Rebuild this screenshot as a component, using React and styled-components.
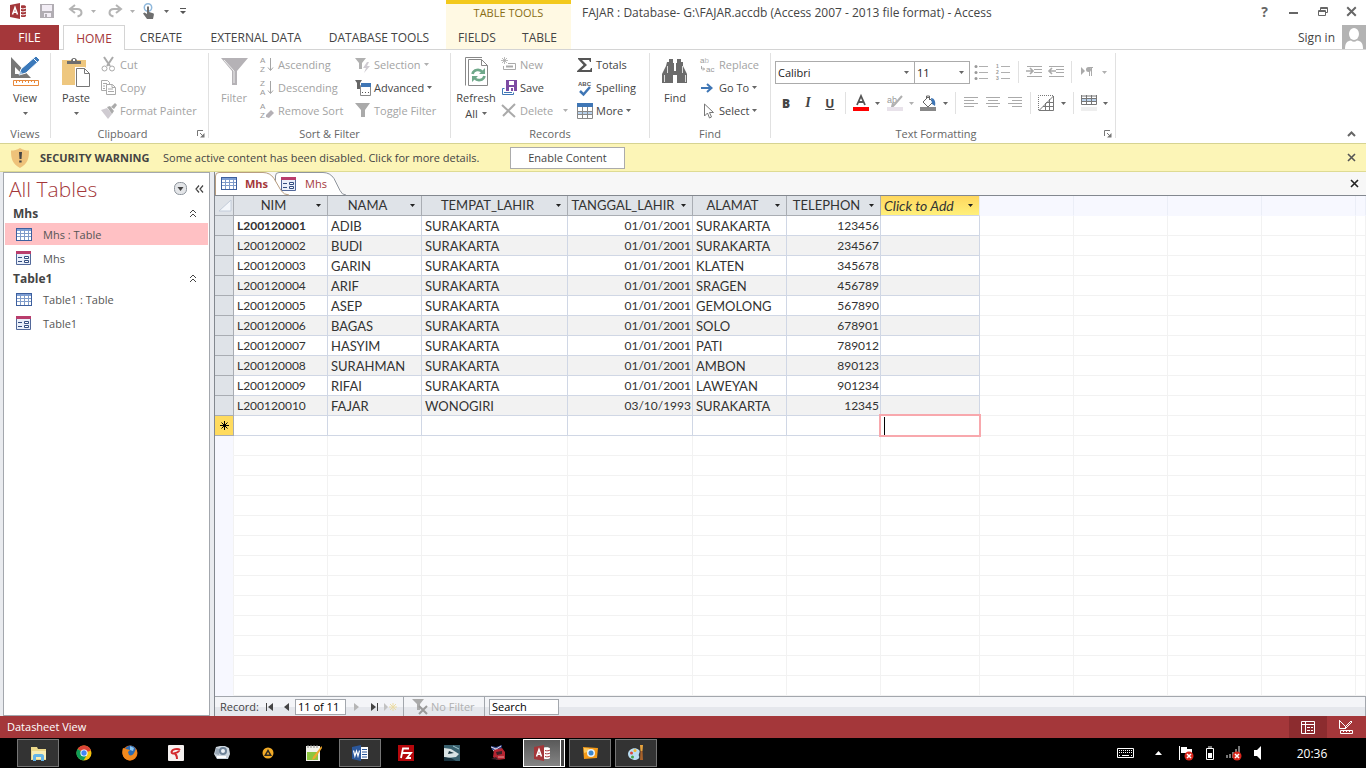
import React from "react";
import styled, { createGlobalStyle, css } from "styled-components";

const GlobalStyle = createGlobalStyle`
  * {
    box-sizing: border-box;
  }

  body {
    margin: 0;
    font-family: "Open Sans", "Noto Sans", sans-serif;
    font-size: 11px;
    color: #444;
    background: #fff;
  }

  button,
  input,
  select {
    font: inherit;
    color: inherit;
    margin: 0;
  }

  svg {
    display: block;
    flex: none;
    overflow: visible;
  }
`;

/* ---------- data ---------- */

const columns = [
  { name: "NIM", width: 94 },
  { name: "NAMA", width: 94 },
  { name: "TEMPAT_LAHIR", width: 146 },
  { name: "TANGGAL_LAHIR", width: 125 },
  { name: "ALAMAT", width: 94 },
  { name: "TELEPHON", width: 94 },
];

const records = [
  ["L200120001", "ADIB", "SURAKARTA", "01/01/2001", "SURAKARTA", "123456"],
  ["L200120002", "BUDI", "SURAKARTA", "01/01/2001", "SURAKARTA", "234567"],
  ["L200120003", "GARIN", "SURAKARTA", "01/01/2001", "KLATEN", "345678"],
  ["L200120004", "ARIF", "SURAKARTA", "01/01/2001", "SRAGEN", "456789"],
  ["L200120005", "ASEP", "SURAKARTA", "01/01/2001", "GEMOLONG", "567890"],
  ["L200120006", "BAGAS", "SURAKARTA", "01/01/2001", "SOLO", "678901"],
  ["L200120007", "HASYIM", "SURAKARTA", "01/01/2001", "PATI", "789012"],
  ["L200120008", "SURAHMAN", "SURAKARTA", "01/01/2001", "AMBON", "890123"],
  ["L200120009", "RIFAI", "SURAKARTA", "01/01/2001", "LAWEYAN", "901234"],
  ["L200120010", "FAJAR", "WONOGIRI", "03/10/1993", "SURAKARTA", "12345"],
];

const navGroups = [
  {
    name: "Mhs",
    items: [
      { name: "Mhs : Table", type: "table", selected: true },
      { name: "Mhs", type: "form" },
    ],
  },
  {
    name: "Table1",
    items: [
      { name: "Table1 : Table", type: "table" },
      { name: "Table1", type: "form" },
    ],
  },
];

/* ---------- icons ---------- */

const Svg = ({ w = 16, h = 16, children, ...rest }) => (
  <svg width={w} height={h} viewBox={`0 0 ${w} ${h}`} fill="none" aria-hidden="true" {...rest}>
    {children}
  </svg>
);

const Arrow = ({ color = "#666" }) => (
  <Svg w={5} h={3}>
    <path d="M0 0h5L2.5 3z" fill={color} />
  </Svg>
);

const AccessIcon = () => (
  <Svg>
    <path d="M0 2L10 0v16L0 14z" fill="#a4373a" />
    <path d="M11 2.500c3-.8 5 0 5 1v9.200c0 1-2 1.800-5 1z" fill="#a4373a" />
    <path d="M11 5.500c2 .6 4 .3 5-.5M11 8.500c2 .6 4 .3 5-.5M11 11.500c2 .6 4 .3 5-.5" stroke="#fff" />
    <path d="M2.500 11.500L5 4.500l2.500 7M3.500 9.200h3" stroke="#fff" strokeWidth="1.500" />
  </Svg>
);

const AccessTaskIcon = () => (
  <Svg>
    <path d="M10 2.500c3-.8 6 0 6 1v9.200c0 1-3 1.800-6 1z" fill="#fff" />
    <path d="M11 5.500c2 .6 4 .3 5-.5M11 8.500c2 .6 4 .3 5-.5M11 11.500c2 .6 4 .3 5-.5" stroke="#a4373a" />
    <path d="M0 2L10 0v16L0 14z" fill="#a4373a" />
    <path d="M2.500 11.500L5 4.500l2.500 7M3.500 9.200h3" stroke="#fff" strokeWidth="1.500" />
  </Svg>
);

const SaveIcon = () => (
  <Svg w={14} h={14}>
    <path d="M0 0h14v14H0z" fill="#b1adb3" />
    <path d="M2 1h10v6H2zM4 9h7v4H4z" fill="#f2edf5" />
    <path d="M5 10h2v3H5z" fill="#b1adb3" />
  </Svg>
);

const UndoIcon = () => (
  <Svg w={16} h={14} stroke="#b4b4b4" strokeWidth="2">
    <path d="M7 1L2 5l5 4M3 5h6c3 0 4.500 1.500 4.500 4s-2 3-4 3.500" />
  </Svg>
);

const RedoIcon = () => (
  <Svg w={16} h={14} stroke="#b4b4b4" strokeWidth="2">
    <path d="M9 1l5 4-5 4M13 5H7C4 5 2.500 6.500 2.500 9s2 3 4 3.500" />
  </Svg>
);

const TouchIcon = () => (
  <Svg w={14} h={16}>
    <circle cx="6" cy="4.500" r="3.700" stroke="#8fb8dc" strokeWidth="1.500" />
    <path d="M5 3.500h2V9l4 1.200c1 .3 1 1 .8 2L11 16H5l-4-5.500 1.500-1L5 11z" fill="#6e6e6e" />
  </Svg>
);

const CustomizeIcon = () => (
  <Svg w={6} h={6}>
    <path d="M0 0h6v1H0zM0 3h6L3 6z" fill="#555" />
  </Svg>
);

const PersonIcon = () => (
  <Svg w={24} h={24}>
    <path d="M0 0h24v24H0z" fill="#b3b3b3" />
    <ellipse cx="12" cy="9" rx="5" ry="6" fill="#fff" />
    <path d="M3 24c0-6 2-8 6-8.500 2 1.600 4 1.600 6 0 4 .5 6 2.500 6 8.500z" fill="#fff" />
  </Svg>
);

const ViewIcon = () => (
  <Svg w={32} h={32}>
    <path d="M2 1v21h20L2 1zM6 11l7 7H6z" fill="#777" fillRule="evenodd" />
    <path d="M10 19l2-6L27 0l4 4-14 13z" fill="#3b79ba" stroke="#fff" />
    <path d="M10 19l1.500-4 2.500 2.500z" fill="#9fc0e2" />
    <path d="M24.500 2.500l4 4" stroke="#fff" />
    <path d="M4.500 24.500h25v5h-25z" stroke="#e8893b" fill="#fff" />
    <path d="M7.500 24v3M10.500 24v2M13.500 24v3M16.500 24v2M19.500 24v3M22.500 24v2M25.500 24v3" stroke="#e8893b" />
  </Svg>
);

const PasteIcon = () => (
  <Svg w={32} h={32}>
    <path d="M2 4h24v25H2z" fill="#eec77f" />
    <path d="M7 8V5h4c0-4 6-4 6 0h4v3z" fill="#6d6d6d" />
    <path d="M13 3h2v2h-2z" fill="#fff" />
    <path d="M15 11h10l6 6v15H15z" fill="#fff" />
    <path d="M16.500 12.500h8l5 5v13h-13zM24.500 12.500v5h5" stroke="#777" />
  </Svg>
);

const CutIcon = () => (
  <Svg w={15} h={15} stroke="#aaa">
    <path d="M3 0l6 9M12 0L6 9" strokeWidth="2" />
    <circle cx="3.500" cy="11.500" r="2.500" />
    <circle cx="11" cy="11.500" r="2.500" />
  </Svg>
);

const CopyIcon = () => (
  <Svg w={15} h={15} stroke="#aaa">
    <path d="M5 10.500H.5V.5h6l2 2V4" />
    <path d="M5.500 4.500h6l3 3v7h-9zM11 4.500v3h3M7 9h5M7 11.500h6M2 3.500h4M2 6h2M2 8.500h2" />
  </Svg>
);

const PainterIcon = () => (
  <Svg>
    <path d="M0 7l6-2 5 6-4 5z" fill="#cfcbd1" />
    <path d="M6 4l3-1 4 5-2 3z" fill="#aaa" />
    <path d="M10 4l4-4 2 2-3 4z" fill="#aaa" />
  </Svg>
);

const FilterBigIcon = () => (
  <Svg w={32} h={32}>
    <path d="M3 2h27L19 15v14h-5V15z" fill="#b5b2b6" />
    <path d="M6 4l10 11v12" stroke="#eee" />
  </Svg>
);

const SortIcon = ({ top, bottom, erase }) => (
  <Svg fontFamily="Liberation Sans" fontSize="8">
    <text x="1" y="6" fill="#999">{top}</text>
    <text x="1" y="15" fill="#999">{bottom}</text>
    {erase ? (
      <path d="M7 12l5-5 3 3-5 5-3-1z" fill="#b4b0b5" />
    ) : (
      <path d="M11.500 1v12M9 10.500l2.500 3 2.500-3" stroke="#a5a5a5" />
    )}
  </Svg>
);

const SelectionIcon = () => (
  <Svg>
    <path d="M0 1h11L7 6v6H4V6z" fill="#b0b0b0" />
    <path d="M12 5l-4 6h3l-2 5 6-7h-3l2-4z" fill="#cfcbd2" />
  </Svg>
);

const AdvancedIcon = () => (
  <Svg>
    <path d="M5.500 5.500h10v10h-10z" fill="#fff" stroke="#888" />
    <path d="M6 3h10v4H6z" fill="#3f76b5" />
    <path d="M0 0h7L5 3v6H2V3z" fill="#666" />
    <path d="M7 12h1v1H7zM10 12h1v1h-1zM13 12h1v1h-1z" fill="#555" />
  </Svg>
);

const FunnelIcon = ({ off }) => (
  <Svg>
    <path d={off ? "M0 0h12L8 5v6H5V5z" : "M0 0h15L10 7v7H6V7z"} fill="#aaa" />
    {off && <path d="M7 7l8 8M15 7l-8 8" stroke="#999" strokeWidth="2" />}
  </Svg>
);

const RefreshIcon = () => (
  <Svg w={32} h={32}>
    <path d="M5.500 29.500v-28H22" stroke="#888" />
    <path d="M8.500 3.500h13l6 6v20h-19zM21.500 3.500v6h6" stroke="#888" fill="#fff" />
    <path d="M12.500 18c1-4.500 7-5.500 10-2M24.500 20c-1 4.500-7 5.500-10 2" stroke="#6fa88a" strokeWidth="2.600" />
    <path d="M25 12v6h-6zM12 26v-6h6z" fill="#6fa88a" />
  </Svg>
);

const NewIcon = () => (
  <Svg stroke="#aaa">
    <path d="M3.500 0v7M0 3.500h7M1 1l5 5M6 1L1 6" strokeWidth="0.800" />
    <path d="M4 12.500H2.500V9M7 6.500h7.500v6H4" />
    <path d="M5 9.500h7" strokeWidth="2" />
  </Svg>
);

const SaveRecordIcon = () => (
  <Svg>
    <path d="M5 0h11v11H5z" fill="#7c4ba3" />
    <path d="M8 1h5v4H8zM8 7h5v4H8z" fill="#fff" />
    <path d="M10 8h2v3h-2z" fill="#7c4ba3" />
    <path d="M3.500 8.500h-2v6h11v-2" stroke="#3f76b5" />
    <path d="M3 12h8v1H3z" fill="#3f76b5" />
  </Svg>
);

const DeleteIcon = () => (
  <Svg stroke="#aaa" strokeWidth="2">
    <path d="M1 2l13 12M14 1L2 13" />
  </Svg>
);

const SigmaIcon = () => (
  <Svg>
    <path d="M1 1h13v4h-1l-1-2H5l5 5-5.500 5H13l1-2h1v4H0v-1l6.500-6L1 2z" fill="#555" />
  </Svg>
);

const SpellingIcon = () => (
  <Svg>
    <text x="1" y="6" fontFamily="Liberation Sans" fontSize="6" fontWeight="700" fill="#555">ABC</text>
    <path d="M3 11l3.500 3.500L13 7" stroke="#3f76b5" strokeWidth="2.500" />
  </Svg>
);

const MoreIcon = () => (
  <Svg>
    <path d="M0 0h16v4H0z" fill="#3f76b5" />
    <path d="M0 8h16v4H0z" fill="#b9d1ea" />
    <path d="M.5 4v11.500h15V4M.5 8.500h15M.5 11.500h15M5.500 4v11M10.500 4v11" stroke="#888" />
  </Svg>
);

const FindIcon = () => (
  <Svg w={28} h={26} fill="none">
    <path d="M6 3h2V0h4v4h1v8h2V4h1V0h4v3h2v4l4 8v9H16v-8h-4v8H1v-9l4-8z" fill="#6b6b6b" />
    <path d="M6.500 7v7M21.500 7v7M3.500 16v7M24.500 16v7" stroke="#ddd" />
  </Svg>
);

const ReplaceIcon = () => (
  <Svg fontFamily="Liberation Sans" fontSize="8">
    <text x="0" y="6" fill="#999">a<tspan fill="#bbb">b</tspan></text>
    <text x="6" y="15" fill="#999">ac</text>
    <path d="M1.500 9v3h3M3 10.500L4.500 12 3 13.500" stroke="#aaa" />
  </Svg>
);

const GoToIcon = () => (
  <Svg>
    <path d="M1 8h10M7 4l4.500 4L7 12" stroke="#3f76b5" strokeWidth="2" />
  </Svg>
);

const SelectIcon = () => (
  <Svg>
    <path d="M4.500 1v12l3-3 2 5 2-1-2-4.500h4z" fill="#fff" stroke="#777" />
  </Svg>
);

const FontColorIcon = () => (
  <Svg>
    <path d="M4 10l4-9 4 9M5.500 7h5" stroke="#555" strokeWidth="1.800" />
    <path d="M0 12h16v4H0z" fill="#f00" />
  </Svg>
);

const HighlightIcon = () => (
  <Svg>
    <text x="0" y="8" fontFamily="Liberation Sans" fontSize="9" fill="#999">ab</text>
    <path d="M15 1l-7 8-3 3 1-4" stroke="#b0b0b0" strokeWidth="2" />
    <path d="M0 12h16v4H0z" fill="#e8e2ea" />
  </Svg>
);

const FillIcon = () => (
  <Svg>
    <path d="M3 7l5-5 5 5-5 5zM6.500 4V1h3v4" stroke="#666" />
    <path d="M11 3c3 0 5 3 4 8l-3-2z" fill="#3f76b5" />
    <path d="M0 12h16v4H0z" fill="#888" />
  </Svg>
);

const ListIcon = ({ numbered }) => (
  <Svg w={15} h={16} fontFamily="Liberation Sans" fontSize="5" fontWeight="700">
    {[2.5, 8.5, 14.5].map((y, i) => (
      <g key={y}>
        {numbered ? (
          <text x="0" y={y + 1.5} fill="#999">{i + 1}</text>
        ) : (
          <circle cx="2" cy={y} r="1.500" fill="#999" />
        )}
        <path d={`M5 ${y}h9`} stroke="#b0b0b0" />
      </g>
    ))}
  </Svg>
);

const IndentIcon = ({ back }) => (
  <Svg w={16} h={12} stroke="#aaa">
    <path d="M1 .5h15M8 3.500h8M8 6.500h8M1 10.500h15" />
    <path d={back ? "M8 5H1M4 2L1 5l3 3" : "M0 5h7M4 2l3 3-3 3"} strokeWidth="1.600" />
  </Svg>
);

const DirectionIcon = () => (
  <Svg w={14} h={10} fill="none">
    <path d="M1 0l4 4-4 4z" fill="#aaa" />
    <path d="M13 .5H9M9.500 0v9M11.500 0v9" stroke="#aaa" />
    <circle cx="8.500" cy="2.500" r="2.500" fill="#aaa" />
  </Svg>
);

const AlignIcon = ({ align }) => {
  const x = { left: 0, center: 2, right: 4 }[align];
  return (
    <Svg w={14} h={12} stroke="#aaa">
      <path d={`M0 .5h14M${x} 3.500h10M0 6.500h14M${x} 9.500h10`} />
    </Svg>
  );
};

const GridlinesIcon = () => (
  <Svg>
    <path d="M.5 15V.5H15" stroke="#777" strokeDasharray="1 1" />
    <path d="M1 15.500h14.500V1zM5 11.500h10M8 7.500h7M7.500 8v7M11.500 4v11" stroke="#777" />
  </Svg>
);

const AltRowIcon = () => (
  <Svg>
    <path d="M0 0h16v10H0z" fill="#fff" />
    <path d="M0 4h16v3H0z" fill="#b9d1ea" />
    <path d="M.5 1h15M.5 0v9.500h15V0M.5 3.500h15M.5 6.500h15M5.500 0v9M10.500 0v9" stroke="#777" />
    <path d="M0 12h16v4H0z" fill="#eee" />
  </Svg>
);

const LauncherIcon = () => (
  <Svg w={8} h={8}>
    <path d="M.5 6V.5H6M3 3l3 3" stroke="#777" />
    <path d="M7.500 3v4.500H3z" fill="#777" />
  </Svg>
);

const ShieldIcon = () => (
  <Svg w={20} h={22}>
    <path d="M10 1c3 2 6 2.500 9 2.500 0 8-1 13-9 17.500C2 16.500 1 11.500 1 3.500 4 3.500 7 3 10 1z" fill="#eec27a" />
    <path d="M9 5h3l-.5 7h-2zM9.200 13.500h2.400v2H9.200z" fill="#444" />
  </Svg>
);

const CloseIcon = ({ size = 9, color = "#555" }) => (
  <Svg w={9} h={9} width={size} height={size}>
    <path d="M1 1l7 7M8 1L1 8" stroke={color} strokeWidth="1.600" />
  </Svg>
);

const TableIcon = () => (
  <Svg w={16} h={13}>
    <path d="M0 0h16v13H0z" fill="#3d5f9e" />
    <path d="M1 3h14v9H1z" fill="#fff" />
    <path d="M1 1h14v2H1z" fill="#7d9fd6" />
    <path d="M4.500 1v11M8.500 1v11M12.500 1v11M1 5.500h14M1 8.500h14" stroke="#7f9bc9" />
  </Svg>
);

const FormIcon = () => (
  <Svg w={15} h={14}>
    <path d="M.5 .5h14v13H.5z" fill="#e9effa" stroke="#53699a" />
    <path d="M0 0h15v3H0z" fill="#b93d6c" />
    <path d="M2 6h4v1H2zM2 10h4v1H2z" fill="#334d80" />
    <path d="M8.500 5.500h4v2h-4zM8.500 9.500h4v2h-4z" stroke="#334d80" fill="#fff" />
  </Svg>
);

const CollapseIcon = () => (
  <Svg w={8} h={9} stroke="#444">
    <path d="M1 4l3-3 3 3M1 8l3-3 3 3" />
  </Svg>
);

const RecordIcon = ({ type, off }) => {
  const shapes = {
    first: "M0 0h1v8H0zM7 0v8L2 4z",
    prev: "M6 0v8L1 4z",
    next: "M1 0v8l5-4z",
    last: "M0 0v8l5-4zM6 0h1v8H6z",
  };
  return (
    <Svg w={8} h={8}>
      <path d={shapes[type]} fill={off ? "#b5b5b5" : "#444"} />
    </Svg>
  );
};

const NewRecordIcon = () => (
  <Svg w={13} h={8}>
    <path d="M0 0v8l4-4z" fill="#c2c2c2" />
    <path d="M9 0v8M5 4h8M6 1l6 6M12 1L6 7" stroke="#ecdca4" />
  </Svg>
);

const DatasheetIcon = () => (
  <Svg w={14} h={13} stroke="#fff">
    <path d="M.5 .5h13v12H.5zM0 3.500h14M4.500 0v13M6 6.500h3M10 6.500h2M6 9.500h3M10 9.500h2" />
  </Svg>
);

const DesignIcon = () => (
  <Svg w={14} h={14} stroke="#fff">
    <path d="M.5 0v8.500H7M1 1l5 5M6 7l6-6 1 1-6 6zM1.500 10.500h12v3h-12zM4.500 10v2M7.500 10v2M10.500 10v2" />
  </Svg>
);

/* taskbar icons */

const ExplorerIcon = () => (
  <Svg w={17} h={17}>
    <path d="M1 2h6l1 2h8v11H1z" fill="#ecd88a" />
    <path d="M2 6h14v8H2z" fill="#f8edb5" />
    <path d="M3 16v-5c0-1 1-2 2-2h7c1 0 2 1 2 2v5h-3v-4H6v4z" fill="#65b5e8" />
  </Svg>
);

const ChromeIcon = () => (
  <Svg>
    <circle cx="8" cy="8" r="7.500" fill="#f4c20d" />
    <path d="M8 8L1.500 4A7.500 7.500 0 0 1 15 5.500z" fill="#db4437" />
    <path d="M8 8L1.500 4a7.500 7.500 0 0 0 6 11.500l3-5z" fill="#0f9d58" />
    <circle cx="8" cy="8" r="3.600" fill="#fff" />
    <circle cx="8" cy="8" r="2.700" fill="#4285f4" />
  </Svg>
);

const FirefoxIcon = () => (
  <Svg>
    <circle cx="8" cy="8" r="7.500" fill="#e66a10" />
    <circle cx="8.500" cy="6" r="5.500" fill="#2b6ab3" />
    <path d="M1 3l3 1 4 1-2 2 1 3c2 1 4 0 5-2l2-4c3 5-1 11-6 11.500C1 15-1 8 1 3z" fill="#f28a1e" />
    <path d="M8 1l4 2-1 3-3-1z" fill="#8cc8f2" />
  </Svg>
);

const RedNoteIcon = () => (
  <Svg>
    <rect width="16" height="16" rx="1" fill="#f5f1f0" />
    <path d="M12 5C10 3 4 4 3.500 7c0 3 6 1 8-1.500M6 8c2 1 3 3 3 6" stroke="#d3272b" strokeWidth="2" />
  </Svg>
);

const GhostIcon = () => (
  <Svg>
    <path d="M2 2l4-1h5l4 2 1 6-2 5H3L0 9z" fill="#ccd6df" />
    <path d="M2 3l4 1-1 6-4-1z" fill="#9aa9b8" />
    <circle cx="9" cy="6" r="4" fill="#6f8499" />
    <circle cx="9" cy="6" r="2" fill="#eef3f8" />
    <path d="M3 12h9" stroke="#fff" strokeWidth="2" />
  </Svg>
);

const AimpIcon = () => (
  <Svg w={14} h={14}>
    <circle cx="7" cy="7" r="5.500" fill="#f2ab27" />
    <path d="M7 3l4 7H3z" fill="#2d2920" />
    <path d="M7 6l1.500 2.500h-3z" fill="#f2ab27" />
  </Svg>
);

const NotepadIcon = () => (
  <Svg>
    <path d="M0 1h14v15H0z" fill="#f2f2ec" />
    <path d="M1 7h11v8H1z" fill="#8cc63f" />
    <path d="M2 0v3M5 0v3M8 0v3M11 0v3" stroke="#888" />
    <path d="M15.500 1L7 12l-1 3 3-1.500L16 3z" fill="#f0a72c" />
  </Svg>
);

const WordIcon = () => (
  <Svg>
    <path d="M8 2h8v12H8z" fill="#fff" />
    <path d="M10 4.500h5M10 7h5M10 9.500h5M10 12h5" stroke="#2b579a" />
    <path d="M0 2l9-2v16l-9-2z" fill="#2b579a" />
    <path d="M1.500 5.500l1.400 5.500 1.600-5L6 11l1.500-5.500" stroke="#fff" strokeWidth="1.200" />
  </Svg>
);

const FilezillaIcon = () => (
  <Svg>
    <path d="M0 0h16v16H0z" fill="#b5070c" />
    <path d="M3 13L5 3.500h6M4 8h4M8 8h5l-4 5h4" stroke="#fff" strokeWidth="1.800" />
  </Svg>
);

const TrainIcon = () => (
  <Svg>
    <path d="M0 0h16v16H0z" fill="#38606e" />
    <path d="M0 3l7 1 8 5-3 3-8 1-4-1z" fill="#d9e3e4" />
    <path d="M0 12l7 1 5 3H0zM5 6l5 2-6 1z" fill="#17323e" />
    <path d="M9 1l6 3" stroke="#9fc6cf" />
  </Svg>
);

const TruckIcon = () => (
  <Svg>
    <path d="M1 1l5 1 6-2-1 6-9-1z" fill="#33478f" />
    <path d="M1 2l10 4M11 1L3 6" stroke="#e7dfe7" />
    <path d="M4 5l8-2 3 4v7l-8 1-4-3z" fill="#b42531" />
    <path d="M6 7l6-1v3l-5 1zM1 14l5-2 3 3z" fill="#3b2028" />
    <path d="M8 12h6" stroke="#e9a0a0" />
  </Svg>
);

const CameraIcon = () => (
  <Svg w={17} h={16}>
    <path d="M1 2l15 1-1 10-13 1z" fill="#f49a18" />
    <path d="M2 3l5 .5v3L2 8z" fill="#ffc95a" />
    <circle cx="9" cy="8" r="4" fill="#e8f2fb" />
    <circle cx="9" cy="8" r="2.500" fill="#3a87cf" />
  </Svg>
);

const PaintIcon = () => (
  <Svg>
    <path d="M0 9c0-5 7-8 11-4 2 2-1 4 0 6s-1 4-5 4c-4-1-6-3-6-6z" fill="#b9dcf1" />
    <circle cx="3.500" cy="8" r="1.500" fill="#d8453c" />
    <circle cx="7" cy="5.500" r="1.500" fill="#f1b62e" />
    <circle cx="4.500" cy="12" r="1.500" fill="#49a548" />
    <path d="M12 0h3l-.5 6h-2z" fill="#e8a33d" />
    <path d="M12.500 6h2l.5 9h-3z" fill="#a8612a" />
  </Svg>
);

const KeyboardIcon = () => (
  <Svg w={17} h={10}>
    <path d="M.5 .5h16v9H.5z" stroke="#fff" />
    <path d="M2 2.500h13M2 4.500h13" stroke="#fff" strokeDasharray="1 1" />
    <path d="M2 7.500h1M5 7.500h7M14 7.500h1" stroke="#fff" />
  </Svg>
);

const Alert = () => (
  <>
    <circle cx="11" cy="11" r="4.500" fill="#d9261c" />
    <path d="M9 9l4 4M13 9l-4 4" stroke="#fff" strokeWidth="1.500" />
  </>
);

const FlagIcon = () => (
  <Svg>
    <path d="M1.500 1v14" stroke="#fff" />
    <path d="M3 2h6v2h5v5H9V8H3z" fill="#fff" />
    <Alert />
  </Svg>
);

const BatteryIcon = () => (
  <Svg w={8} h={14}>
    <path d="M.5 2.500h7v11h-7zM2 1h4" stroke="#fff" />
    <path d="M2 7h4v5H2z" fill="#fff" />
  </Svg>
);

const SignalIcon = () => (
  <Svg>
    <path d="M0 10h2v3H0zM3 9h2v4H3zM6 7h2v6H6zM9 4h2v9H9zM12 1h2v12h-2z" fill="#777" />
    <Alert />
  </Svg>
);

const SpeakerIcon = () => (
  <Svg w={9} h={14}>
    <path d="M0 4h3l4-4v14l-4-4H0z" fill="#fff" />
  </Svg>
);

/* ---------- header ---------- */

const Header = () => (
  <HeaderBar>
    <HeaderLeft>
      <QuickAccess>
        <IconButton aria-label="Access"><AccessIcon /></IconButton>
        <IconButton aria-label="Save" $gap={7}><SaveIcon /></IconButton>
        <IconButton aria-label="Undo" $gap={7}><UndoIcon /></IconButton>
        <ArrowButton aria-label="Undo list"><Arrow color="#b0b0b0" /></ArrowButton>
        <IconButton aria-label="Redo" $gap={5}><RedoIcon /></IconButton>
        <ArrowButton aria-label="Redo list"><Arrow color="#b0b0b0" /></ArrowButton>
        <IconButton aria-label="Touch mode"><TouchIcon /></IconButton>
        <ArrowButton aria-label="Touch mode list"><Arrow /></ArrowButton>
        <IconButton aria-label="Customize"><CustomizeIcon /></IconButton>
      </QuickAccess>
      <Tabs>
        <FileTab $width={59}>FILE</FileTab>
        <Tab $width={62} $active>HOME</Tab>
        <Tab $width={72}>CREATE</Tab>
        <Tab $width={118}>EXTERNAL DATA</Tab>
        <Tab $width={128}>DATABASE TOOLS</Tab>
      </Tabs>
    </HeaderLeft>
    <Contextual>
      <ContextTitle>TABLE TOOLS</ContextTitle>
      <Tabs>
        <Tab $width={62}>FIELDS</Tab>
        <Tab $width={63}>TABLE</Tab>
      </Tabs>
    </Contextual>
    <HeaderRight>
      <TitleRow>
        <Title>FAJAR : Database- G:\FAJAR.accdb (Access 2007 - 2013 file format) - Access</Title>
        <WindowButton aria-label="Help"><b>?</b></WindowButton>
        <WindowButton aria-label="Minimize">
          <Svg w={9} h={9}><path d="M0 5h9v2H0z" fill="#666" /></Svg>
        </WindowButton>
        <WindowButton aria-label="Restore">
          <Svg w={10} h={9} stroke="#666">
            <path d="M.5 3.500h7v5h-7zM0 4.500h8M2.500 3V.5h7v5H8M2 1.500h8" />
          </Svg>
        </WindowButton>
        <WindowButton aria-label="Close"><CloseIcon size={11} color="#666" /></WindowButton>
      </TitleRow>
      <SignIn>
        <a href="#signin">Sign in</a>
        <PersonIcon />
      </SignIn>
    </HeaderRight>
  </HeaderBar>
);

const HeaderBar = styled.header`
  display: flex;
  height: 50px;
  border-bottom: 1px solid #d4d4d4;
`;

const HeaderLeft = styled.div`
  width: 446px;
`;

const HeaderRight = styled.div`
  flex: 1;
`;

const QuickAccess = styled.div`
  display: flex;
  align-items: center;
  height: 25px;
  padding: 0 0 3px 7px;
`;

const plainButton = css`
  display: flex;
  align-items: center;
  justify-content: center;
  padding: 0;
  border: 0;
  background: none;
`;

const IconButton = styled.button`
  ${plainButton}
  width: 22px;
  height: 22px;
  margin-left: ${(props) => props.$gap || 0}px;
`;

const ArrowButton = styled.button`
  ${plainButton}
  width: 12px;
  height: 22px;
`;

const Tabs = styled.nav`
  display: flex;
  height: 25px;
`;

const Tab = styled.button`
  ${plainButton}
  flex: none;
  width: ${(props) => props.$width}px;
  height: 25px;
  font-size: 12px;
  white-space: nowrap;
  ${(props) =>
    props.$active &&
    css`
      color: #a4373a;
      background: #fff;
      border: 1px solid #d4d4d4;
      border-bottom: 0;
    `}
`;

const FileTab = styled(Tab)`
  margin-right: 4px;
  color: #fff;
  background: #a4373a;
`;

const Contextual = styled.div`
  width: 125px;
  background: #fff9e3;
  border-top: 4px solid #f3c91c;
`;

const ContextTitle = styled.div`
  height: 21px;
  line-height: 18px;
  text-align: center;
  color: #8a6d14;
`;

const TitleRow = styled.div`
  display: flex;
  height: 25px;
`;

const Title = styled.div`
  flex: 1;
  padding-left: 11px;
  font-size: 12px;
  line-height: 25px;
  white-space: nowrap;
`;

const WindowButton = styled.button`
  ${plainButton}
  width: 29px;
  height: 23px;

  b {
    font-size: 14px;
    color: #666;
  }
`;

const SignIn = styled.div`
  display: flex;
  justify-content: flex-end;
  align-items: center;
  gap: 7px;
  height: 24px;

  a {
    font-size: 12px;
    color: inherit;
    text-decoration: none;
  }
`;

/* ---------- ribbon ---------- */

const BigButton = ({ icon, label, off, drop, inlineDrop }) => (
  <Big disabled={off}>
    <BigIcon>{icon}</BigIcon>
    <span>{label}</span>
    {drop && <BigDrop>{inlineDrop}<Arrow /></BigDrop>}
  </Big>
);

const SmallButton = ({ icon, label, off, drop, split }) => (
  <Small disabled={off} $split={split}>
    <SmallIcon>{icon}</SmallIcon>
    <span>{label}</span>
    {drop && <Arrow color={off ? "#b0b0b0" : "#666"} />}
  </Small>
);

const Group = ({ name, launcher, children }) => (
  <GroupBox>
    <GroupBody>{children}</GroupBody>
    <GroupLabel>
      <span>{name}</span>
      {launcher && (
        <Launcher aria-label={`${name} options`}><LauncherIcon /></Launcher>
      )}
    </GroupLabel>
  </GroupBox>
);

const Picker = ({ label, value, width }) => (
  <PickerBox $width={width}>
    <select aria-label={label} defaultValue={value}>
      <option>{value}</option>
    </select>
    <Arrow />
  </PickerBox>
);

const Ribbon = () => (
  <RibbonBar>
    <Group name="Views">
      <BigButton icon={<ViewIcon />} label="View" drop />
    </Group>
    <Group name="Clipboard" launcher>
      <BigButton icon={<PasteIcon />} label="Paste" drop />
      <ButtonColumn $width={107}>
        <SmallButton icon={<CutIcon />} label="Cut" off />
        <SmallButton icon={<CopyIcon />} label="Copy" off />
        <SmallButton icon={<PainterIcon />} label="Format Painter" off />
      </ButtonColumn>
    </Group>
    <Group name="Sort & Filter">
      <BigButton icon={<FilterBigIcon />} label="Filter" off />
      <ButtonColumn $width={96}>
        <SmallButton icon={<SortIcon top="A" bottom="Z" />} label="Ascending" off />
        <SmallButton icon={<SortIcon top="Z" bottom="A" />} label="Descending" off />
        <SmallButton icon={<SortIcon top="A" bottom="Z" erase />} label="Remove Sort" off />
      </ButtonColumn>
      <ButtonColumn $width={95}>
        <SmallButton icon={<SelectionIcon />} label="Selection" off drop />
        <SmallButton icon={<AdvancedIcon />} label="Advanced" drop />
        <SmallButton icon={<FunnelIcon />} label="Toggle Filter" off />
      </ButtonColumn>
    </Group>
    <Group name="Records">
      <BigButton icon={<RefreshIcon />} label="Refresh" drop inlineDrop="All" />
      <ButtonColumn $width={76}>
        <SmallButton icon={<NewIcon />} label="New" off />
        <SmallButton icon={<SaveRecordIcon />} label="Save" />
        <SmallButton icon={<DeleteIcon />} label="Delete" off drop split />
      </ButtonColumn>
      <ButtonColumn $width={72}>
        <SmallButton icon={<SigmaIcon />} label="Totals" />
        <SmallButton icon={<SpellingIcon />} label="Spelling" />
        <SmallButton icon={<MoreIcon />} label="More" drop />
      </ButtonColumn>
    </Group>
    <Group name="Find">
      <BigButton icon={<FindIcon />} label="Find" />
      <ButtonColumn $width={70}>
        <SmallButton icon={<ReplaceIcon />} label="Replace" off />
        <SmallButton icon={<GoToIcon />} label="Go To" drop />
        <SmallButton icon={<SelectIcon />} label="Select" drop />
      </ButtonColumn>
    </Group>
    <Group name="Text Formatting" launcher>
      <FormatRows>
        <FormatRow>
          <Picker label="Font" value="Calibri" width={140} />
          <Picker label="Font size" value="11" width={55} />
          <IconButton aria-label="Bullets"><ListIcon /></IconButton>
          <IconButton aria-label="Numbering"><ListIcon numbered /></IconButton>
          <Divider />
          <IconButton aria-label="Increase indent"><IndentIcon /></IconButton>
          <IconButton aria-label="Decrease indent"><IndentIcon back /></IconButton>
          <Divider />
          <IconButton aria-label="Text direction"><DirectionIcon /></IconButton>
          <ArrowButton aria-label="Text direction list"><Arrow color="#b0b0b0" /></ArrowButton>
        </FormatRow>
        <FormatRow>
          <LetterButton aria-label="Bold"><b>B</b></LetterButton>
          <LetterButton aria-label="Italic"><i>I</i></LetterButton>
          <LetterButton aria-label="Underline"><u>U</u></LetterButton>
          <Divider />
          <IconButton aria-label="Font color"><FontColorIcon /></IconButton>
          <ArrowButton aria-label="Font color list"><Arrow /></ArrowButton>
          <IconButton aria-label="Highlight"><HighlightIcon /></IconButton>
          <ArrowButton aria-label="Highlight list"><Arrow color="#b0b0b0" /></ArrowButton>
          <IconButton aria-label="Background color"><FillIcon /></IconButton>
          <ArrowButton aria-label="Background color list"><Arrow /></ArrowButton>
          <Divider />
          <IconButton aria-label="Align left"><AlignIcon align="left" /></IconButton>
          <IconButton aria-label="Center"><AlignIcon align="center" /></IconButton>
          <IconButton aria-label="Align right"><AlignIcon align="right" /></IconButton>
          <Divider />
          <IconButton aria-label="Gridlines"><GridlinesIcon /></IconButton>
          <ArrowButton aria-label="Gridlines list"><Arrow /></ArrowButton>
          <Divider />
          <IconButton aria-label="Alternate row color"><AltRowIcon /></IconButton>
          <ArrowButton aria-label="Alternate row color list"><Arrow /></ArrowButton>
        </FormatRow>
      </FormatRows>
    </Group>
    <RibbonEnd>
      <CollapseButton aria-label="Collapse the ribbon">
        <Svg w={9} h={6}><path d="M1 5l3.500-3.500L8 5" stroke="#666" strokeWidth="2" /></Svg>
      </CollapseButton>
    </RibbonEnd>
  </RibbonBar>
);

const RibbonBar = styled.div`
  display: flex;
  flex: none;
  height: 93px;
  padding-top: 3px;
`;

const GroupBox = styled.section`
  height: 85px;
  border-right: 1px solid #e1e1e1;
`;

const GroupBody = styled.div`
  display: flex;
  height: 69px;
  padding: 0 3px;
`;

const GroupLabel = styled.div`
  display: flex;
  align-items: center;
  height: 23px;
  color: #666;

  span {
    flex: 1;
    text-align: center;
  }
`;

const Launcher = styled.button`
  ${plainButton}
  width: 14px;
  height: 14px;
`;

const Big = styled.button`
  ${plainButton}
  flex-direction: column;
  justify-content: flex-start;
  width: 44px;
  line-height: 16px;
  white-space: nowrap;

  &:disabled {
    color: #a3a3a3;
  }
`;

const BigIcon = styled.span`
  display: flex;
  align-items: center;
  height: 37px;
`;

const BigDrop = styled.span`
  display: flex;
  align-items: center;
  gap: 4px;
  height: 15px;
`;

const ButtonColumn = styled.div`
  width: ${(props) => props.$width}px;
`;

const Small = styled.button`
  ${plainButton}
  justify-content: flex-start;
  gap: 3px;
  height: 23px;
  padding-left: 3px;
  white-space: nowrap;

  &:disabled {
    color: #a3a3a3;
  }

  > svg {
    margin-left: ${(props) => (props.$split ? 7 : 0)}px;
  }
`;

const SmallIcon = styled.span`
  width: 16px;
`;

const FormatRows = styled.div`
  display: flex;
  flex-direction: column;
  gap: 9px;
  width: 338px;
  padding: 8px 0 0 1px;
`;

const FormatRow = styled.div`
  display: flex;
  align-items: center;
  height: 22px;
`;

const PickerBox = styled.div`
  position: relative;
  width: ${(props) => props.$width}px;
  height: 23px;
  border: 1px solid #ababab;

  & + & {
    border-left: 0;
  }

  select {
    width: 100%;
    height: 21px;
    padding: 0 2px;
    border: 0;
    appearance: none;
    background: none;
    color: #222;
  }

  svg {
    position: absolute;
    right: 5px;
    top: 9px;
  }
`;

const Divider = styled.div`
  width: 1px;
  height: 22px;
  margin: 0 4px;
  background: #e1e1e1;
`;

const LetterButton = styled(IconButton)`
  font-size: 12px;
  font-weight: 700;

  i {
    font-family: "Liberation Serif", serif;
    font-size: 14px;
  }
`;

const RibbonEnd = styled.div`
  flex: 1;
  display: flex;
  justify-content: flex-end;
  align-items: flex-end;
  padding-right: 4px;
`;

const CollapseButton = styled(IconButton)`
  height: 18px;
`;

/* ---------- security warning ---------- */

const Warning = () => (
  <WarningBar>
    <ShieldIcon />
    <b>SECURITY WARNING</b>
    <span>Some active content has been disabled. Click for more details.</span>
    <EnableButton>Enable Content</EnableButton>
    <WarningClose aria-label="Close message"><CloseIcon /></WarningClose>
  </WarningBar>
);

const WarningBar = styled.div`
  display: flex;
  flex: none;
  align-items: center;
  height: 29px;
  padding: 0 4px 0 10px;
  background: #fcf5b7;
  border-top: 1px solid #d6d392;
  border-bottom: 1px solid #dedb93;

  b {
    width: 113px;
    margin-left: 10px;
    font-weight: 700;
    white-space: nowrap;
  }

  span {
    width: 357px;
    padding-left: 10px;
    white-space: nowrap;
  }
`;

const EnableButton = styled.button`
  width: 115px;
  height: 22px;
  padding: 0;
  background: #fff;
  border: 1px solid #ababab;
`;

const WarningClose = styled(IconButton)`
  margin-left: auto;
`;

/* ---------- navigation pane ---------- */

const NavPane = () => (
  <Nav>
    <NavTitle>
      <h1>All Tables</h1>
      <NavButton aria-label="Filter objects">
        <Svg w={13} h={13}>
          <rect x=".5" y=".5" width="12" height="12" rx="5" fill="#e3e5e8" stroke="#8d949c" />
          <path d="M3.500 5h6l-3 4z" fill="#444" />
        </Svg>
      </NavButton>
      <NavButton aria-label="Shutter bar">
        <Svg w={9} h={8} stroke="#444" strokeWidth="1.200">
          <path d="M4 .5L1 4l3 3.500M8 .5L5 4l3 3.500" />
        </Svg>
      </NavButton>
    </NavTitle>
    {navGroups.map((group) => (
      <div key={group.name}>
        <NavGroup>
          {group.name}
          <CollapseIcon />
        </NavGroup>
        {group.items.map((item) => (
          <NavItem key={item.name} href="#object" $selected={item.selected}>
            <span>{item.type === "table" ? <TableIcon /> : <FormIcon />}</span>
            {item.name}
          </NavItem>
        ))}
      </div>
    ))}
  </Nav>
);

const Nav = styled.aside`
  width: 207px;
  margin-right: 4px;
  background: #fff;
  border: 1px solid #a3a7ad;
`;

const NavTitle = styled.div`
  display: flex;
  align-items: center;
  height: 31px;
  padding-left: 5px;

  h1 {
    flex: 1;
    margin: 0;
    font-size: 21px;
    font-weight: 300;
    line-height: 34px;
    color: #a4373a;
  }
`;

const NavButton = styled.button`
  ${plainButton}
  width: 19px;
  height: 30px;
`;

const NavGroup = styled.div`
  display: flex;
  align-items: center;
  justify-content: space-between;
  height: 18px;
  padding: 0 12px 0 9px;
  font-size: 12px;
  font-weight: 700;
`;

const NavItem = styled.a`
  display: flex;
  align-items: center;
  height: 22px;
  margin: 1px 1px 2px;
  padding-left: 11px;
  color: #555;
  text-decoration: none;
  background: ${(props) => (props.$selected ? "#ffc1c4" : "none")};

  span {
    width: 27px;
  }

  & + & {
    margin-bottom: 0;
  }
`;

/* ---------- datasheet ---------- */

const Document = () => (
  <DocumentPane>
    <DocTabs>
      <DocTab $active>
        <TabShape width="80" height="23" viewBox="0 0 80 23">
          <path d="M.5 23V4q0-3.500 3.500-3.500h44q7 0 11 6l7 12q3 4.500 8 4.500" fill="#fff" stroke="#b79d80" />
        </TabShape>
        <span><TableIcon /></span>
        Mhs
      </DocTab>
      <DocTab>
        <TabShape width="80" height="23" viewBox="0 0 80 23">
          <path d="M6 23Q.5 17 .5 10V4Q.5.500 4 .500h44q7 0 11 6l6 12q2 4.500 6 4.500" fill="#fff" stroke="#8f959d" />
        </TabShape>
        <span><FormIcon /></span>
        Mhs
      </DocTab>
      <DocClose aria-label="Close object"><CloseIcon color="#222" /></DocClose>
    </DocTabs>
    <SheetArea>
      <Sheet>
        <colgroup>
          <col width="19" />
          {columns.map((column) => (
            <col key={column.name} width={column.width} />
          ))}
          <col width="99" />
          <col width="94" />
          <col width="94" />
          <col width="94" />
          <col width="94" />
          <col />
        </colgroup>
        <thead>
          <tr>
            <HeadCell>
              <Svg w={12} h={11}><path d="M12 0v11H0z" fill="#f4f7fb" stroke="#c3ccd9" /></Svg>
            </HeadCell>
            {columns.map((column) => (
              <HeadCell key={column.name}>
                <HeadButton>
                  <span>{column.name}</span>
                  <Arrow color="#222" />
                </HeadButton>
              </HeadCell>
            ))}
            <HeadCell $add>
              <HeadButton $add>
                <span>Click to Add</span>
                <Arrow color="#222" />
              </HeadButton>
            </HeadCell>
            {blanks.map((i) => (
              <BlankHead key={i} />
            ))}
          </tr>
        </thead>
        <tbody>
          {records.map((record, index) => (
            <Row key={record[0]} $odd={index % 2 === 1}>
              <Selector />
              {record.map((value, i) => (
                <Cell key={i} $number={i === 0 || i === 3 || i === 5} $right={i === 3 || i === 5} $key={index === 0 && i === 0}>
                  {value}
                </Cell>
              ))}
              <Cell />
              {blanks.map((i) => (
                <BlankCell key={i} />
              ))}
            </Row>
          ))}
          <Row>
            <Selector $current>
              <Svg w={9} h={9} stroke="#000"><path d="M4.500 0v9M0 4.500h9M1.500 1.500l6 6M7.500 1.500l-6 6" /></Svg>
            </Selector>
            {columns.map((column) => (
              <Cell key={column.name} />
            ))}
            <Cell>
              <Editor>
                <input aria-label="New field value" />
                <Caret />
              </Editor>
            </Cell>
            {blanks.map((i) => (
              <BlankCell key={i} />
            ))}
          </Row>
          {Array.from({ length: 13 }, (_, row) => (
            <tr key={row}>
              <BlankCell $edge />
              {Array.from({ length: 12 }, (_, i) => (
                <BlankCell key={i} />
              ))}
            </tr>
          ))}
        </tbody>
      </Sheet>
    </SheetArea>
    <RecordBar>
      <label htmlFor="record">Record:</label>
      <RecordButton aria-label="First record"><RecordIcon type="first" /></RecordButton>
      <RecordButton aria-label="Previous record"><RecordIcon type="prev" /></RecordButton>
      <RecordInput id="record" $width={51} defaultValue="11 of 11" />
      <RecordButton aria-label="Next record" $width={22}><RecordIcon type="next" off /></RecordButton>
      <RecordButton aria-label="Last record" $width={14}><RecordIcon type="last" /></RecordButton>
      <RecordButton aria-label="New record"><NewRecordIcon /></RecordButton>
      <BarDivider />
      <NoFilter disabled>
        <FunnelIcon off />
        No Filter
      </NoFilter>
      <BarDivider />
      <RecordInput aria-label="Search" $width={70} defaultValue="Search" />
    </RecordBar>
  </DocumentPane>
);

const blanks = [0, 1, 2, 3, 4];

const DocumentPane = styled.main`
  flex: 1;
  min-width: 0;
  display: flex;
  flex-direction: column;
  background: #fff;
  border-left: 1px solid #83888f;
`;

const DocTabs = styled.div`
  display: flex;
  height: 23px;
  padding-right: 1px;
  background: #f7f7f7;
`;

const DocTab = styled.button`
  ${plainButton}
  position: relative;
  z-index: ${(props) => (props.$active ? 1 : 0)};
  justify-content: flex-start;
  width: 60px;
  padding-left: 6px;
  color: #a4373a;
  font-weight: ${(props) => (props.$active ? 700 : 400)};

  span {
    position: relative;
    width: 24px;
  }
`;

const TabShape = styled.svg`
  position: absolute;
  left: 0;
  top: 0;
  z-index: -1;
`;

const DocClose = styled(IconButton)`
  margin-left: auto;
`;

const SheetArea = styled.div`
  flex: 1;
  min-height: 0;
  overflow: hidden;
  border-top: 1px solid #83888f;
`;

const Sheet = styled.table`
  width: 100%;
  table-layout: fixed;
  border-collapse: separate;
  border-spacing: 0;
  font-family: Lato, sans-serif;
  font-size: 13px;
  color: #333;

  th,
  td {
    height: 20px;
    padding: 0;
    line-height: 19px;
    white-space: nowrap;
  }
`;

const HeadCell = styled.th`
  background: ${(props) => (props.$add ? "linear-gradient(#ffd75e, #fff07a)" : "#dfe3e8")};
  border-right: 1px solid ${(props) => (props.$add ? "#e8ebf2" : "#a9adb3")};
  border-bottom: 1px solid ${(props) => (props.$add ? "#d0d7e5" : "#a9adb3")};
  font-weight: 400;
  font-style: ${(props) => (props.$add ? "italic" : "normal")};

  > svg {
    margin-left: 4px;
  }
`;

const HeadButton = styled.button`
  ${plainButton}
  width: 100%;
  height: 19px;
  padding-right: 6px;
  font-style: inherit;

  span {
    flex: 1;
    padding: ${(props) => (props.$add ? "0 0 0 3px" : "0 3px 0 0")};
    text-align: ${(props) => (props.$add ? "left" : "center")};
    font-size: ${(props) => (props.$add ? 14 : 13)}px;
  }
`;

const BlankHead = styled.td`
  background: #f7f8ff;
  border-right: 1px solid #ebeef7;
  border-bottom: 1px solid #f7f8ff;
`;

const Row = styled.tr`
  background: ${(props) => (props.$odd ? "#f2f2f2" : "#fff")};
`;

const Selector = styled.td`
  background: ${(props) => (props.$current ? "#ffdb5e" : "#dfe3e8")};
  border-right: 1px solid #a9adb3;
  border-bottom: 1px solid #a9adb3;

  svg {
    margin-left: 5px;
  }
`;

const Cell = styled.td`
  position: relative;
  border-right: 1px solid #d0d7e5;
  border-bottom: 1px solid #d0d7e5;
  font-size: ${(props) => (props.$number ? 12 : 13)}px;
  font-weight: ${(props) => (props.$key ? 700 : 400)};
  text-align: ${(props) => (props.$right ? "right" : "left")};

  && {
    padding: 1px ${(props) => (props.$right ? 1 : 0)}px 0 3px;
    line-height: 18px;
  }
`;

const BlankCell = styled.td`
  background: ${(props) => (props.$edge ? "#f7f8ff" : "#fff")};
  border-right: 1px solid #f2f2f2;
  border-bottom: 1px solid ${(props) => (props.$edge ? "#f7f8ff" : "#f2f2f2")};
`;

const Editor = styled.div`
  position: absolute;
  inset: -2px;
  border: 2px solid #f8a8ad;
  background: #fff;

  input {
    display: block;
    width: 100%;
    height: 100%;
    padding: 0 3px;
    border: 0;
    outline: 0;
  }
`;

const Caret = styled.span`
  position: absolute;
  left: 3px;
  top: 1px;
  bottom: 0;
  width: 1px;
  background: #000;
`;

const RecordBar = styled.div`
  display: flex;
  align-items: center;
  height: 20px;
  padding-left: 5px;
  background: linear-gradient(#f4f5f8 50%, #e5e7ec 50%);
  border-top: 1px solid #a3a7ad;
  border-right: 1px solid #a3a7ad;

  label {
    width: 41px;
  }
`;

const RecordButton = styled.button`
  ${plainButton}
  width: ${(props) => props.$width || 17}px;
  height: 18px;
`;

const RecordInput = styled.input`
  width: ${(props) => props.$width}px;
  height: 16px;
  padding: 0 2px;
  border: 1px solid #a3a7ad;
  background: #fff;
  color: #000;
`;

const BarDivider = styled.div`
  width: 1px;
  height: 19px;
  margin: 0 4px;
  background: #a3a7ad;
`;

const NoFilter = styled.button`
  ${plainButton}
  justify-content: flex-start;
  gap: 3px;
  width: 72px;
  padding-left: 4px;
  white-space: nowrap;

  &:disabled {
    color: #b0b0b0;
  }
`;

/* ---------- status bar and taskbar ---------- */

const StatusBar = () => (
  <Status>
    <span>Datasheet View</span>
    <StatusButton aria-label="Datasheet view" $active><DatasheetIcon /></StatusButton>
    <StatusButton aria-label="Design view"><DesignIcon /></StatusButton>
  </Status>
);

const Status = styled.footer`
  display: flex;
  flex: none;
  height: 22px;
  padding: 0 1px 0 7px;
  line-height: 22px;
  color: #fff;
  background: #a4373a;

  span {
    flex: 1;
  }
`;

const StatusButton = styled.button`
  ${plainButton}
  width: 38px;
  background: ${(props) => (props.$active ? "#8c2c2f" : "none")};
`;

const tasks = [
  { name: "Explorer", icon: <ExplorerIcon />, open: true },
  { name: "Chrome", icon: <ChromeIcon /> },
  { name: "Firefox", icon: <FirefoxIcon /> },
  { name: "Reader", icon: <RedNoteIcon /> },
  { name: "Viewer", icon: <GhostIcon /> },
  { name: "Player", icon: <AimpIcon /> },
  { name: "Notepad", icon: <NotepadIcon /> },
  { name: "Word", icon: <WordIcon />, open: true },
  { name: "FileZilla", icon: <FilezillaIcon /> },
  { name: "Train", icon: <TrainIcon /> },
  { name: "Truck", icon: <TruckIcon /> },
  { name: "Access", icon: <AccessTaskIcon />, open: true, active: true },
  { name: "Camera", icon: <CameraIcon />, open: true },
  { name: "Paint", icon: <PaintIcon />, open: true },
];

const Taskbar = () => (
  <TaskbarRow>
    {tasks.map((task) => (
      <TaskButton key={task.name} aria-label={task.name} $open={task.open} $active={task.active}>
        {task.icon}
      </TaskButton>
    ))}
    <Tray>
      <TrayButton aria-label="Keyboard" $width={33}><KeyboardIcon /></TrayButton>
      <TrayButton aria-label="Hidden icons" $width={32}>
        <Svg w={7} h={4}><path d="M0 4h7L3.500 0z" fill="#fff" /></Svg>
      </TrayButton>
      <TrayButton aria-label="Action center"><FlagIcon /></TrayButton>
      <TrayButton aria-label="Battery"><BatteryIcon /></TrayButton>
      <TrayButton aria-label="Network"><SignalIcon /></TrayButton>
      <TrayButton aria-label="Volume"><SpeakerIcon /></TrayButton>
      <time>20:36</time>
    </Tray>
  </TaskbarRow>
);

const TaskbarRow = styled.div`
  display: flex;
  flex: none;
  align-items: center;
  gap: 4px;
  height: 30px;
  padding: 0 24px 0 17px;
  background: #000;
`;

const TaskButton = styled.button`
  ${plainButton}
  width: 42px;
  height: 28px;
  border: 1px solid transparent;
  ${(props) =>
    props.$open &&
    css`
      background: #333;
      border-color: #757575;
    `}
  ${(props) =>
    props.$active &&
    css`
      padding-right: 4px;
      background: linear-gradient(#595959, #858585);
      border-color: #fff;
      box-shadow: inset -3px 0 #444, inset -4px 0 #fff;
    `}
`;

const Tray = styled.div`
  display: flex;
  align-items: center;
  margin-left: auto;
  color: #fff;

  time {
    width: 72px;
    padding-left: 12px;
    text-align: center;
    font-size: 12px;
  }
`;

const TrayButton = styled.button`
  ${plainButton}
  width: ${(props) => props.$width || 24}px;
  height: 28px;
`;

const App = () => (
  <Window>
    <GlobalStyle />
    <Header />
    <Ribbon />
    <Warning />
    <Workspace>
      <NavPane />
      <Document />
    </Workspace>
    <StatusBar />
    <Taskbar />
  </Window>
);

const Window = styled.div`
  display: flex;
  flex-direction: column;
  height: 100vh;
`;

const Workspace = styled.div`
  flex: 1;
  min-height: 0;
  display: flex;
  padding-left: 3px;
  background: #e9ebef;
`;

export default App;
